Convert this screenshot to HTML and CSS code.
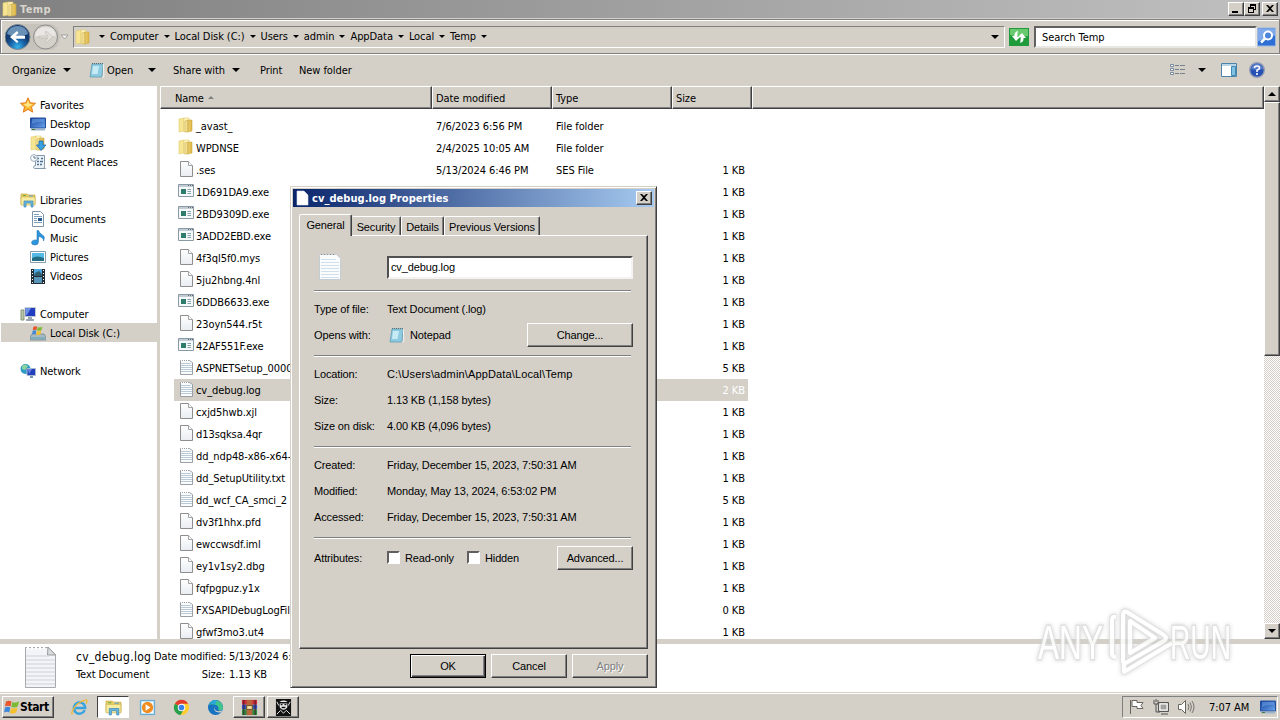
FILE: index.html
```
<!DOCTYPE html>
<html lang="en">
<head>
<meta charset="UTF-8">
<title>Temp</title>
<link rel="stylesheet" href="styles.css">
</head>
<body>
<svg class="defs" width="0" height="0">
    <defs>
        <linearGradient id="gFolder"><stop offset="0" stop-color="#f8ebaa"/><stop offset="1" stop-color="#dcb23c"/></linearGradient>
        <linearGradient id="gBlue" x2="1" y2="1"><stop offset="0" stop-color="#103f9e"/><stop offset="1" stop-color="#6fa8ee"/></linearGradient>
        <radialGradient id="gBack" cy=".9"><stop offset="0" stop-color="#35b5ea"/><stop offset=".6" stop-color="#1a63a8"/><stop offset="1" stop-color="#143c70"/></radialGradient>
        <linearGradient id="gPage" x2="0" y2="1"><stop offset="0" stop-color="#fff"/><stop offset="1" stop-color="#e9edf2"/></linearGradient>
    </defs>
    <symbol id="folder" viewBox="0 0 16 16">
        <path d="M1 2l5-1v13l-5 1z" fill="#f6e592" stroke="#e2cb70" stroke-width=".6"/>
        <path d="M6 1h5v12l-5 2z" fill="#fff2bb" stroke="#e2cb70" stroke-width=".6"/>
        <path d="M7 4l3-1v12H7zM10 3h4v11l-4 1z" fill="url(#gFolder)" stroke="#cfae48" stroke-width=".6"/>
    </symbol>
    <symbol id="page" viewBox="0 0 16 16">
        <path d="M2.500.500h8l4 4v11h-12z" fill="url(#gPage)" stroke="#8e8e8e"/>
        <path d="M10.500.500v4h4" fill="#fff" stroke="#a2a2a2"/>
    </symbol>
    <symbol id="text" viewBox="0 0 16 16">
        <path d="M2.500 1.500h9l3 2v12h-12z" fill="#fbfcfd" stroke="#9a9fa5"/>
        <path d="M3 4.500h10M3 6.500h11M3 8.500h11M3 10.500h11M3 12.500h11" stroke="#b9c9d5"/>
        <path d="M3 1.500h8" stroke="#fff" stroke-dasharray="1 1"/>
    </symbol>
    <symbol id="exe" viewBox="0 0 16 14">
        <path d="M.5.500h15v12H.5z" fill="#f5f9fa" stroke="#8a9aa4"/>
        <path d="M1 2h14" stroke="#c1ccd4" stroke-width="2"/><path d="M10 1.500h5" stroke="#667" stroke-dasharray="1 1"/>
        <path d="M3 5h5v5H3z" fill="#2e7d6c"/><path d="M9.500 5.500H13M9.500 7.500H13M9.500 9.500H13" stroke="#87a1ad"/>
    </symbol>
    <symbol id="notepad" viewBox="0 0 16 16">
        <path d="M3 2h11l-1 13H1z" fill="#8ccbe0" stroke="#5795ad" stroke-width=".7"/>
        <path d="M4 4h6L8.500 12H3z" fill="#c6ebf5"/><path d="M14.300 2l.6 12.500-2 .8" fill="none" stroke="#f5f3ee"/>
        <path d="M3 1.500h11" stroke="#556f78" stroke-dasharray="1 1"/>
    </symbol>
    <symbol id="monitor" viewBox="0 0 16 14">
        <path d="M.5 1h15v10H.5z" fill="url(#gBlue)" stroke="#244f9c"/><path d="M2 2h12v3Q8 4 2 7z" fill="#74a8ea" opacity=".5"/>
        <path d="M1 12.500h14" stroke="#9db4cc" stroke-width="2"/><path d="M2 12.500h3" stroke="#497f36"/>
    </symbol>
    <symbol id="libs" viewBox="0 0 16 16">
        <path d="M1 2h6l1 1h7v9H1z" fill="#ecd266" stroke="#c5a537" stroke-width=".7"/>
        <path d="M1 5h14v8H1z" fill="#f7eca4" stroke="#cdb34c" stroke-width=".7"/><path d="M3 3.500h3" stroke="#61a94b"/><path d="M9 4h4" stroke="#58a4d8"/>
        <path d="M4 15V9h9v6h-2v-4H6v4z" fill="#6bb9df" stroke="#3a87b8" stroke-width=".7"/>
    </symbol>
    <symbol id="winflag" viewBox="0 0 16 16">
        <path d="M2 2.500Q5 .8 7.500 2.500L6.500 7.500Q4 6 1 7.500z" fill="#e7562c"/><path d="M8.300 3Q11 4.500 15 2.500L13.700 7.500Q11 9 7.300 8z" fill="#7dba34"/>
        <path d="M1 8.500Q4 7 6.300 8.500L5.300 13.500Q3 12 0 13.500z" fill="#3f87d8"/><path d="M7 9Q10 10.300 13.500 8.500L12.300 13.500Q9 15.500 6 14z" fill="#f5c12c"/>
    </symbol>
</svg>

<div class="desktop">
    <div class="titlebar">
        <svg class="i16"><use href="#folder"/></svg>
        <span class="caption">Temp</span>
        <div class="win-buttons">
            <span class="wbtn"><svg viewBox="0 0 14 12"><path d="M3 8h6v2H3z"/></svg></span>
            <span class="wbtn"><svg viewBox="0 0 14 12"><path d="M5 1h6v6H9V6h1V3H6v1H5zM3 4h6v6H3zM4 6v3h4V6z" fill-rule="evenodd"/></svg></span>
            <span class="wbtn close"><svg viewBox="0 0 14 12"><path d="M3 2h2l2 2 2-2h2L8 5.500 11 9H9L7 7 5 9H3l3-3.500z"/></svg></span>
        </div>
    </div>

    <div class="navbar">
        <svg class="travel" viewBox="0 0 70 28">
            <path d="M14 1H45Q54 2 55 14Q54 26 45 27H14z" fill="#c6c3bc"/>
            <circle cx="12.500" cy="14" r="12.500" fill="url(#gBack)" stroke="#7f8990"/>
            <path d="M2 11Q4 3 12.500 3T23 11Q12 16 2 11z" fill="#8db4d6" opacity=".7"/>
            <path d="M5 14l7-6 1.500 2-3 2.700H20v3h-9.500l3 2.700L12 20z" fill="#fff"/>
            <circle cx="40.500" cy="14" r="12" fill="#d4d1cb" stroke="#8c8c8a"/>
            <path d="M30 13Q31 4 40.500 4T51 13z" fill="#e9e7e3"/>
            <path d="M48 14l-7-6-1 2 3 3h-9v2h9l-3 3 1 2z" fill="#e2dfda" stroke="#bab7b1" stroke-width=".6"/>
            <path d="M56 12h7l-3.500 4z" fill="#f4f2ef" stroke="#888" stroke-width=".7"/>
        </svg>
        <div class="address">
            <svg class="i16"><use href="#folder"/></svg>
            <i class="down"></i><span>Computer</span>
            <i class="down"></i><span>Local Disk (C:)</span>
            <i class="down"></i><span>Users</span>
            <i class="down"></i><span>admin</span>
            <i class="down"></i><span>AppData</span>
            <i class="down"></i><span>Local</span>
            <i class="down"></i><span>Temp</span>
            <i class="down"></i>
            <i class="down big last"></i>
        </div>
        <svg class="refresh" viewBox="0 0 20 18">
            <path d="M0 0h20v18H0z" fill="#1f9b3c"/><path d="M1 1h18v7Q10 10 1 7z" fill="#68c96f"/>
            <path d="M9 3Q5 4 5.500 8H3l4 5 4-4H8.500Q8 6 9 3zM11 15q4-1 3.500-5H17l-4-5-4 4h2.500q.5 3-.5 6z" fill="#fff"/>
        </svg>
        <div class="search">Search Temp</div>
        <svg class="go" viewBox="0 0 19 19">
            <path d="M.5.500h18v18H.5z" fill="#2e6fd6" stroke="#9fb9de"/><path d="M1 1h17v7Q9 9 1 14z" fill="#7fa9ea"/>
            <circle cx="11" cy="8" r="4" fill="#4c84dc" stroke="#fff" stroke-width="2"/><path d="M8 11l-4 4" stroke="#fff" stroke-width="2.500"/>
        </svg>
    </div>

    <div class="commands">
        <span class="c-org">Organize</span><i class="down big"></i>
        <svg class="i16 c-note"><use href="#notepad"/></svg><span class="c-open">Open</span><i class="down big"></i>
        <span class="c-share">Share with</span><i class="down big"></i>
        <span class="c-print">Print</span>
        <span class="c-new">New folder</span>
        <svg class="c-view" viewBox="0 0 16 14"><path d="M.5 1.500h3v2h-3zM.5 5.500h3v2h-3zM.5 9.500h3v2h-3z" fill="#fff" stroke="#798a9c"/><path d="M5 2.500h4M5 6.500h4M5 10.500h4M10 2.500h5M10 6.500h5M10 10.500h5" stroke="#77828c"/></svg>
        <i class="down big"></i>
        <svg class="c-pane" viewBox="0 0 16 14"><path d="M.5.500h15v13H.5z" fill="#fff" stroke="#4b83ab"/><path d="M1 2h14" stroke="#bad6e6" stroke-width="2"/><path d="M10.500 3.500h4v9h-4z" fill="#7fc2e4" stroke="#4187b2"/></svg>
        <svg class="c-help" viewBox="0 0 16 16"><circle cx="8" cy="8" r="7.300" fill="#2650b4" stroke="#939db6" stroke-width="1.400"/><path d="M2 7Q3 2 8 2t6 5Q8 9 2 7z" fill="#7d9de0" opacity=".6"/><path d="M5.500 6Q5.500 4 8 4t2.500 2Q10.500 7.300 8 8.200V10M8 11v2" fill="none" stroke="#fff" stroke-width="1.600"/></svg>
    </div>

    <div class="main">
        <div class="sidebar">
            <div class="nav top"><svg class="i16" viewBox="0 0 16 16"><path d="M8 .8l2.200 5 5.300.500-4 3.600 1.200 5.200L8 12.400l-4.700 2.700 1.200-5.200-4-3.600 5.300-.5z" fill="#fcb934" stroke="#df7a1e"/><path d="M8 3l1.300 4 3.700.3-5 3-4.500-3.300 3.500-.5z" fill="#ffe88a"/></svg>Favorites</div>
            <div class="nav sub"><svg class="i16"><use href="#monitor"/></svg>Desktop</div>
            <div class="nav sub"><svg class="i16" viewBox="0 0 16 16"><use href="#folder"/><path d="M9 6h4v4h3l-5 5.500L6.500 10H9z" fill="#39a0e2" stroke="#1d69ae" stroke-width=".8"/></svg>Downloads</div>
            <div class="nav sub"><svg class="i16" viewBox="0 0 16 16"><path d="M5.500 1.500h9v10q-1 3 1 3h-11q-2-1 0-3h1z" fill="#edf2f6" stroke="#8397ab"/><path d="M7 4.500h2M11 4.500h2M7 7.500h2M10 7.500h3M7 10.500h2M10 10.500h2" stroke="#4c6f96" stroke-width="1.300"/><circle cx="4" cy="4" r="3.400" fill="#f7fafc" stroke="#9cacb9"/><path d="M4 2v2h2" fill="none" stroke="#5a7796"/></svg>Recent Places</div>
            <div class="nav top gap"><svg class="i16"><use href="#libs"/></svg>Libraries</div>
            <div class="nav sub"><svg class="i16" viewBox="0 0 16 16"><path d="M2.500.500h8l3 3v12h-11z" fill="#fff" stroke="#7d93a8"/><path d="M4 3.500h5M4 5.500h8M4 7.500h3M4 9.500h3M4 11.500h8" stroke="#7d9fc0"/><path d="M8 7h4v3H8z" fill="#275a92"/></svg>Documents</div>
            <div class="nav sub"><svg class="i16" viewBox="0 0 16 16"><path d="M7 .5h1.500q1 3 4 4.500t1 6q0-4-5-4.500v5q0 3.500-3.500 3.500T1.500 12.500Q2 9.500 7 10z" fill="#2d96dd" stroke="#1769ad" stroke-width=".5"/></svg>Music</div>
            <div class="nav sub"><svg class="i16" viewBox="0 0 16 16"><path d="M.5 2.500h15v11H.5z" fill="#fff" stroke="#859cad"/><path d="M2 4h12v8H2z" fill="#55b9e5"/><path d="M2 9q5-3 12 0v3H2z" fill="#246e84"/></svg>Pictures</div>
            <div class="nav sub"><svg class="i16" viewBox="0 0 16 16"><path d="M1 1h14v15H1z" fill="#222d36"/><path d="M4 1h8v7H4z" fill="#4ca6df"/><path d="M4 9h8v6H4z" fill="#5795b9"/><path d="M5 5l4-2 3 3v2H4zM6 10l5 4" fill="#325f70"/><path d="M2.500 2v13M13.500 2v13" stroke="#fff" stroke-dasharray="1 2"/></svg>Videos</div>
            <div class="nav top gap"><svg class="i16" viewBox="0 0 16 16"><path d="M1 4h3v10H1z" fill="#b8c6aa" stroke="#869477"/><path d="M5 1.500h10.500v9H5z" fill="#223ec0" stroke="#c1cad3"/><path d="M6 2h5L7 9H6z" fill="#6b8ee9"/><path d="M8 11h4v2H8zM6 13h8v2H6z" fill="#99a7b4"/></svg>Computer</div>
            <div class="nav sub sel"><svg class="i16" viewBox="0 0 16 16"><path d="M2 9h12l2 3v3H0v-3z" fill="#a7b9c1" stroke="#66818d" stroke-width=".7"/><path d="M1 13h14" stroke="#5aa3b8"/><svg x="2" y="0" width="11" height="11"><use href="#winflag"/></svg></svg>Local Disk (C:)</div>
            <div class="nav top gap"><svg class="i16" viewBox="0 0 16 16"><circle cx="5.500" cy="6" r="5" fill="#2e9bc7"/><path d="M2 3q3-3 6 0L5 7 2 6z" fill="#8bd59c"/><path d="M7 5.500h8.500v7H7z" fill="#223fbe" stroke="#a9b9cf"/><path d="M8 6h4l-3 5z" fill="#6788e2"/><path d="M10 13h3v2h-3z" fill="#7793b5"/></svg>Network</div>
        </div>
        <div class="files">
            <div class="columns">
                <div class="col name">Name <i class="sort"></i></div>
                <div class="col">Date modified</div>
                <div class="col">Type</div>
                <div class="col size">Size</div>
                <div class="col rest"></div>
            </div>
            <div class="rows">
                <div class="row"><svg class="i16"><use href="#folder"/></svg><span>_avast_</span><span>7/6/2023 6:56 PM</span><span>File folder</span><span></span></div>
                <div class="row"><svg class="i16"><use href="#folder"/></svg><span>WPDNSE</span><span>2/4/2025 10:05 AM</span><span>File folder</span><span></span></div>
                <div class="row"><svg class="i16"><use href="#page"/></svg><span>.ses</span><span>5/13/2024 6:46 PM</span><span>SES File</span><span>1 KB</span></div>
                <div class="row"><svg class="i16"><use href="#exe"/></svg><span>1D691DA9.exe</span><span></span><span></span><span>1 KB</span></div>
                <div class="row"><svg class="i16"><use href="#exe"/></svg><span>2BD9309D.exe</span><span></span><span></span><span>1 KB</span></div>
                <div class="row"><svg class="i16"><use href="#exe"/></svg><span>3ADD2EBD.exe</span><span></span><span></span><span>1 KB</span></div>
                <div class="row"><svg class="i16"><use href="#page"/></svg><span>4f3ql5f0.mys</span><span></span><span></span><span>1 KB</span></div>
                <div class="row"><svg class="i16"><use href="#page"/></svg><span>5ju2hbng.4nl</span><span></span><span></span><span>1 KB</span></div>
                <div class="row"><svg class="i16"><use href="#exe"/></svg><span>6DDB6633.exe</span><span></span><span></span><span>1 KB</span></div>
                <div class="row"><svg class="i16"><use href="#page"/></svg><span>23oyn544.r5t</span><span></span><span></span><span>1 KB</span></div>
                <div class="row"><svg class="i16"><use href="#exe"/></svg><span>42AF551F.exe</span><span></span><span></span><span>1 KB</span></div>
                <div class="row"><svg class="i16"><use href="#text"/></svg><span>ASPNETSetup_00000</span><span></span><span></span><span>5 KB</span></div>
                <div class="row sel"><svg class="i16"><use href="#text"/></svg><span>cv_debug.log</span><span></span><span></span><span>2 KB</span></div>
                <div class="row"><svg class="i16"><use href="#page"/></svg><span>cxjd5hwb.xjl</span><span></span><span></span><span>1 KB</span></div>
                <div class="row"><svg class="i16"><use href="#page"/></svg><span>d13sqksa.4qr</span><span></span><span></span><span>1 KB</span></div>
                <div class="row"><svg class="i16"><use href="#text"/></svg><span>dd_ndp48-x86-x64-</span><span></span><span></span><span>1 KB</span></div>
                <div class="row"><svg class="i16"><use href="#text"/></svg><span>dd_SetupUtility.txt</span><span></span><span></span><span>1 KB</span></div>
                <div class="row"><svg class="i16"><use href="#text"/></svg><span>dd_wcf_CA_smci_2</span><span></span><span></span><span>5 KB</span></div>
                <div class="row"><svg class="i16"><use href="#page"/></svg><span>dv3f1hhx.pfd</span><span></span><span></span><span>1 KB</span></div>
                <div class="row"><svg class="i16"><use href="#page"/></svg><span>ewccwsdf.iml</span><span></span><span></span><span>1 KB</span></div>
                <div class="row"><svg class="i16"><use href="#page"/></svg><span>ey1v1sy2.dbg</span><span></span><span></span><span>1 KB</span></div>
                <div class="row"><svg class="i16"><use href="#page"/></svg><span>fqfpgpuz.y1x</span><span></span><span></span><span>1 KB</span></div>
                <div class="row"><svg class="i16"><use href="#text"/></svg><span>FXSAPIDebugLogFil</span><span></span><span></span><span>0 KB</span></div>
                <div class="row"><svg class="i16"><use href="#page"/></svg><span>gfwf3mo3.ut4</span><span></span><span></span><span>1 KB</span></div>
            </div>
        </div>
        <div class="scrollbar">
            <span class="sbtn"><i class="up"></i></span>
            <span class="thumb"></span>
            <span class="sbtn end"><i class="down big"></i></span>
        </div>
    </div>

    <div class="details">
        <svg class="d-icon" viewBox="0 0 34 44">
            <path d="M2.500 2.500h23l7 7v33h-30z" fill="#f2f4f7" stroke="#a6a9ad"/><path d="M25 2l-.5 8h8z" fill="#d9dcdf" stroke="#9b9b9b"/>
            <path d="M3 11h23M3 15h29M3 19h29M3 23h29M3 27h29M3 31h29M3 35h29M3 39h29" stroke="#cdd2da"/><path d="M4 3h20" stroke="#fff" stroke-width="3" stroke-dasharray="2 2"/>
        </svg>
        <div class="d-names"><div class="d-title">cv_debug.log</div><div>Text Document</div></div>
        <div class="d-props">
            <div><label>Date modified:</label>5/13/2024 6:53 PM</div>
            <div><label>Size:</label>1.13 KB</div>
        </div>
    </div>

    <div class="taskbar">
        <div class="start"><svg class="i16"><use href="#winflag"/></svg>Start</div>
        <div class="task"><svg viewBox="0 0 18 18"><path d="M14.500 12A6 6 0 1 1 15 9.500H4.500" fill="none" stroke="#36a3df" stroke-width="2.600"/><path d="M2 15Q-1 17 3 10T16 1q2 0 0 4" fill="none" stroke="#ecb93a" stroke-width="1.400"/></svg></div>
        <div class="task active"><svg viewBox="0 0 16 16"><use href="#libs"/></svg></div>
        <div class="task"><svg viewBox="0 0 18 18"><path d="M1.500 1.500h15v15h-15z" fill="#b9e0f6" stroke="#5aa6d2"/><path d="M3 3h12v12H3z" fill="#fff"/><circle cx="9" cy="9" r="6" fill="#ef8c22"/><path d="M7 5.500l5 3.500-5 3.500z" fill="#fff"/></svg></div>
        <div class="task"><svg viewBox="0 0 18 18"><circle cx="9" cy="9" r="8" fill="#ffcd2e"/><path d="M9 9L2 5a8 8 0 0 1 14 0H9z" fill="#e33b2e"/><path d="M9 9l-7-4a8 8 0 0 0 6 12l4-7z" fill="#279f4c"/><circle cx="9" cy="9" r="4" fill="#fff"/><circle cx="9" cy="9" r="3" fill="#3c80ea"/></svg></div>
        <div class="task"><svg viewBox="0 0 18 18"><circle cx="9" cy="9" r="8" fill="#1773c2"/><path d="M2 6a8 8 0 0 1 15 3q0 4-5 3 1-5-3-6T2 6z" fill="#40c48b"/><path d="M2 6a8 8 0 0 1 8-5l-1 5q-4-2-7 0z" fill="#2ba7d8"/><path d="M10 8q-3 1-1 4 3 2 7 0l-1 2q-6 1-7-2-1-3 2-4z" fill="#d4d0c8"/></svg></div>
        <div class="task raised"><svg viewBox="0 0 18 18"><path d="M1 1h16v5H1z" fill="#cf2a38"/><path d="M1 6h16v5H1z" fill="#3450bb"/><path d="M1 11h16v6H1z" fill="#2f8b40"/><path d="M6 1h6v16H6z" fill="#b8653c"/><path d="M3 1v16M15 1v16" stroke="#401f28"/><path d="M6 7h6v4H6z" fill="#f4e5a6" stroke="#684c1b"/></svg></div>
        <div class="task raised"><svg viewBox="0 0 18 18"><path d="M1 0h16v18H1z" fill="#111"/><path d="M5 3q4-3 8 0v6q-4 5-8 0z" fill="#eee"/><path d="M4 4h10M6 6h2M10 6h2M7 9h4" stroke="#111" stroke-width="1.400"/><path d="M2 16l4-4 3 3 3-3 4 4M2 3l2 4M16 3l-2 4" fill="none" stroke="#eee"/></svg></div>
        <div class="tray">
            <svg class="t-flag" viewBox="0 0 16 16"><path d="M1.500 1v14M3 1.500h5v2h6l-2 3 2 3H8v-2H3z" fill="#fff" stroke="#67635f"/></svg>
            <svg class="t-net" viewBox="0 0 16 16"><path d="M5.500 3.500h10v9h-10z" fill="#ccc9c3" stroke="#555"/><path d="M1 1v4h4V1M3 0v3M3 5v8h4M8 15h7" fill="none" stroke="#555"/><path d="M7 5h7v6H7z" fill="#a3a29f" stroke="#fff"/></svg>
            <svg class="t-vol" viewBox="0 0 18 16"><path d="M1.500 5.500h3l4-4v13l-4-4h-3z" fill="#fff" stroke="#68645f"/><path d="M11 5q2 3 0 6M13 3.500q3 4.500 0 9M15 2q4 6 0 12" fill="none" stroke="#77736e"/></svg>
            <span class="clock">7:07 AM</span>
            <svg class="i16"><use href="#monitor"/></svg>
        </div>
    </div>

    <svg class="watermark" viewBox="0 0 230 90">
        <g class="wm-text"><text x="6" y="52" textLength="65" lengthAdjust="spacingAndGlyphs">ANY</text><text x="138" y="52" textLength="61" lengthAdjust="spacingAndGlyphs">RUN</text></g>
        <path class="wm-line" d="M84 10q-4-1-4 3v33q0 4 4 4M91 56V8q0-5 4-3l37 23q4 3 0 6L92 57v8l48-29M98 14v32l25-15z"/>
        <path class="wm-core" d="M84 10q-4-1-4 3v33q0 4 4 4M91 56V8q0-5 4-3l37 23q4 3 0 6L92 57v8l48-29M98 14v32l25-15z"/>
    </svg>

    <div class="dialog">
        <div class="dlg-title">
            <svg class="i16" viewBox="0 0 16 16"><path d="M3 1h7l4 4v10H3z" fill="#fff" stroke="#d9e4f2" stroke-width=".6"/></svg>
            <span>cv_debug.log Properties</span>
            <span class="wbtn"><svg viewBox="0 0 14 12"><path d="M3 2h2l2 2 2-2h2L8 5.500 11 9H9L7 7 5 9H3l3-3.500z"/></svg></span>
        </div>
        <div class="tabs">
            <span class="tab on">General</span><span class="tab sec">Security</span><span class="tab det">Details</span><span class="tab prev">Previous Versions</span>
        </div>
        <div class="panel">
            <div class="prop head"><label><svg class="file-big" viewBox="0 0 24 28"><path d="M1.500 1.500h17l4 4v21h-21z" fill="#fafcfe" stroke="#c5cdd4"/><path d="M3 6.500h15M3 9.500h18M3 12.500h18M3 15.500h18M3 18.500h18M3 21.500h18M3 24.500h18" stroke="#cfdfeb"/><path d="M3 1.500h15" stroke="#8c8c8c" stroke-dasharray="1 2"/></svg></label><div class="textbox">cv_debug.log</div></div>
            <hr>
            <div class="prop"><label>Type of file:</label><span>Text Document (.log)</span></div>
            <div class="prop"><label>Opens with:</label><svg class="i16 np"><use href="#notepad"/></svg><span>Notepad</span><button class="change">Change...</button></div>
            <hr>
            <div class="prop"><label>Location:</label><span class="path">C:\Users\admin\AppData\Local\Temp</span></div>
            <div class="prop"><label>Size:</label><span>1.13 KB (1,158 bytes)</span></div>
            <div class="prop"><label>Size on disk:</label><span>4.00 KB (4,096 bytes)</span></div>
            <hr>
            <div class="prop"><label>Created:</label><span>Friday, December 15, 2023, 7:50:31 AM</span></div>
            <div class="prop"><label>Modified:</label><span>Monday, May 13, 2024, 6:53:02 PM</span></div>
            <div class="prop"><label>Accessed:</label><span>Friday, December 15, 2023, 7:50:31 AM</span></div>
            <hr>
            <div class="prop attrs"><label>Attributes:</label><i class="check"></i><span class="ro">Read-only</span><i class="check"></i><span>Hidden</span><button class="adv">Advanced...</button></div>
        </div>
        <div class="dlg-buttons"><button class="ok">OK</button><button>Cancel</button><button class="off">Apply</button></div>
    </div>
</div>
</body>
</html>
```
FILE: styles.css
```
* {
    box-sizing: border-box;
}

body {
    margin: 0;
    font-family: "DejaVu Sans Condensed", "DejaVu Sans", sans-serif;
    font-stretch: condensed;
    font-size: 11px;
    letter-spacing: -0.08px;
    color: #000;
}

.defs {
    position: absolute;
}

.desktop {
    position: relative;
    width: 1280px;
    height: 720px;
    overflow: hidden;
    background: #d4d0c8;
    display: flex;
    flex-direction: column;
    white-space: nowrap;
}

svg {
    display: block;
    flex: none;
}

.i16 {
    width: 16px;
    height: 16px;
}

/* small triangles */
.down {
    border: 3px solid transparent;
    border-top-color: #000;
    border-bottom: 0;
    flex: none;
}

.down.big {
    border-width: 4px;
    border-bottom: 0;
}

.up {
    border: 4px solid transparent;
    border-bottom-color: #000;
    border-top: 0;
}

/* title bar */
.titlebar {
    height: 18px;
    flex: none;
    display: flex;
    align-items: center;
    padding: 0 2px;
    background: linear-gradient(to right, #808080, #c0c0c0);
    color: #d8d5ce;
    font-weight: bold;
    letter-spacing: 0.4px;
}

.caption {
    margin-left: 2px;
}

.win-buttons {
    margin-left: auto;
    display: flex;
}

.wbtn {
    width: 16px;
    height: 14px;
    background: #d4d0c8;
    border: 1px solid;
    border-color: #fff #404040 #404040 #fff;
    box-shadow: inset -1px -1px #808080;
}

.wbtn svg {
    width: 14px;
    height: 12px;
}

.wbtn.close {
    margin-left: 2px;
}

/* address bar */
.navbar {
    height: 35px;
    flex: none;
    margin-top: 1px;
    border: 1px solid #808080;
    box-shadow: inset 1px 1px #fff, 0 1px #fff;
    display: flex;
    align-items: center;
    padding: 0 0 0 4px;
}

.travel {
    width: 70px;
    height: 28px;
}

.address {
    width: 932px;
    height: 22px;
    margin-left: -2px;
    padding-left: 1px;
    border: 1px solid;
    border-color: #808080 #fff #fff #808080;
    display: flex;
    align-items: center;
    gap: 5px;
}

.address .down {
    margin-left: 0;
}

.address .i16 + .down {
    margin-left: 3px;
}

.address .down.last {
    margin: 0 5px 0 auto;
}

.refresh {
    width: 20px;
    height: 18px;
    margin: 0 5px 0 4px;
}

.search {
    width: 223px;
    height: 22px;
    background: #fff;
    border: 2px solid;
    border-color: #606060 #e8e6e2 #e8e6e2 #606060;
    padding: 3px 6px;
    line-height: 14px;
}

.go {
    width: 19px;
    height: 20px;
}

/* command bar */
.commands {
    height: 32px;
    flex: none;
    display: flex;
    align-items: center;
    padding-left: 12px;
}

.commands .down {
    margin-left: 8px;
}

.c-org {
    width: 43px;
}

.commands .c-note {
    margin-left: 18px;
}

.c-open {
    width: 27px;
    margin-left: 2px;
}

.c-open + .down.big {
    margin-left: 14px;
}

.c-share {
    width: 51px;
    margin-left: 17px;
}

.c-print {
    width: 22px;
    margin-left: 20px;
}

.c-new {
    margin-left: 17px;
}

.c-view {
    width: 16px;
    height: 14px;
    margin-left: auto;
}

.c-view + .down.big {
    margin-left: 12px;
}

.c-pane {
    width: 16px;
    height: 14px;
    margin: 0 12px 0 15px;
}

.c-help {
    width: 16px;
    height: 16px;
    margin-right: 15px;
}

/* explorer body */
.main {
    height: 553px;
    flex: none;
    display: flex;
    background: #fff;
}

.sidebar {
    width: 160px;
    padding-top: 9px;
    border-right: 3px solid #d4d0c8;
}

.nav {
    height: 19px;
    padding-top: 2px;
    display: flex;
    align-items: center;
    gap: 4px;
}

.nav .i16 {
    margin-top: -2px;
}

.nav.top {
    padding-left: 20px;
}

.nav.sub {
    padding-left: 30px;
}

.nav.gap {
    margin-top: 19px;
}

.nav.sel {
    background: #d4d0c8;
    margin-left: 1px;
    padding-left: 29px;
}

.files {
    flex: 1;
    overflow: hidden;
}

.columns {
    display: flex;
    height: 23px;
}

.col {
    width: 120px;
    padding: 0 3px;
    background: #d4d0c8;
    border: 1px solid;
    border-color: #fff #404040 #404040 #fff;
    box-shadow: inset -1px -1px #808080;
    line-height: 23px;
}

.col.name {
    width: 272px;
    padding-left: 14px;
}

.col.size {
    width: 80px;
}

.col.rest {
    flex: 1;
}

.sort {
    display: inline-block;
    vertical-align: 3px;
    margin-left: 1px;
    border: 3px solid transparent;
    border-bottom-color: #808080;
    border-top: 0;
}

.rows {
    margin-left: 14px;
    padding-top: 6px;
}

.row {
    width: 574px;
    height: 22px;
    display: grid;
    grid-template-columns: 18px 240px 120px 120px 69px;
    align-items: center;
    padding-left: 4px;
}

.row .i16 {
    margin-top: -2px;
}

.row span:last-child {
    text-align: right;
}

.row.sel {
    background: #d4d0c8;
}

.row.sel span:last-child {
    color: #fff;
}

.scrollbar {
    width: 16px;
    display: flex;
    flex-direction: column;
    background: repeating-conic-gradient(#fff 0 25%, #d4d0c8 0 50%) 0 0 / 2px 2px;
}

.sbtn,
.thumb {
    background: #d4d0c8;
    border: 1px solid;
    border-color: #fff #404040 #404040 #fff;
    box-shadow: inset -1px -1px #808080;
}

.sbtn {
    height: 16px;
    display: flex;
    align-items: center;
    justify-content: center;
}

.thumb {
    height: 254px;
}

.sbtn.end {
    margin-top: auto;
}

/* details pane */
.details {
    height: 53px;
    flex: none;
    border-top: 5px solid #d4d0c8;
    background: #fff;
    display: flex;
}

.d-icon {
    width: 34px;
    height: 44px;
    margin: 1px 0 0 23px;
}

.d-names {
    width: 78px;
    margin-left: 19px;
}

.d-title {
    font-size: 12px;
    letter-spacing: 0.3px;
}

.d-names div,
.d-props div {
    height: 18px;
    line-height: 18px;
}

.d-names,
.d-props {
    padding-top: 4px;
}

.d-props label {
    display: inline-block;
    width: 71px;
    margin-right: 4px;
    text-align: right;
}

/* taskbar */
.taskbar {
    height: 28px;
    flex: none;
    border-top: 1px solid #d4d0c8;
    box-shadow: inset 0 1px #fff;
    padding: 3px 2px 1px;
    display: flex;
}

.start {
    width: 52px;
    height: 22px;
    padding-left: 1px;
    display: flex;
    align-items: center;
    border: 1px solid;
    border-color: #fff #404040 #404040 #fff;
    box-shadow: inset -1px -1px #808080;
    font-weight: bold;
    font-size: 12px;
    letter-spacing: -0.4px;
    margin-right: 9px;
}

.task {
    width: 32px;
    height: 22px;
    margin-right: 2px;
    border: 1px solid transparent;
    display: flex;
    align-items: center;
    justify-content: center;
}

.task svg {
    width: 17px;
    height: 17px;
}

.task.active {
    background: #fff;
    border-color: #404040 #fff #fff #404040;
}

.task.raised {
    border-color: #fff #404040 #404040 #fff;
    box-shadow: inset -1px -1px #808080;
}

.tray {
    margin-left: auto;
    width: 156px;
    height: 22px;
    border: 1px solid;
    border-color: #808080 #fff #fff #808080;
    display: flex;
    align-items: center;
    padding-left: 6px;
}

.t-flag,
.t-net {
    width: 16px;
    height: 16px;
    margin-right: 8px;
}

.t-vol {
    width: 18px;
    height: 16px;
}

.clock {
    width: 41px;
    margin: 0 10px 0 14px;
}

/* watermark */
.watermark {
    position: absolute;
    left: 1032px;
    top: 607px;
    width: 230px;
    height: 90px;
    overflow: visible;
    fill: #fff;
    stroke: #dcdcdc;
    stroke-width: 1.5;
    opacity: 0.85;
    filter: drop-shadow(0 0 2px #ccc);
}

.wm-line,
.wm-core {
    fill: none;
    stroke-width: 6;
    stroke-linejoin: round;
}

.wm-core {
    stroke: #fff;
    stroke-width: 4;
}

.wm-text {
    font: 48px "Liberation Sans Narrow", "Liberation Sans", sans-serif;
    letter-spacing: 0;
    stroke-width: 3;
    paint-order: stroke;
}

/* properties dialog */
.dialog {
    position: absolute;
    left: 290px;
    top: 186px;
    width: 367px;
    height: 502px;
    background: #d4d0c8;
    border: 1px solid;
    border-color: #d4d0c8 #404040 #404040 #d4d0c8;
    box-shadow: inset 1px 1px #fff, inset -1px -1px #808080;
    padding: 2px;
    font-family: "Liberation Sans", Arial, sans-serif;
    font-stretch: normal;
    letter-spacing: -0.13px;
}

.dlg-title {
    height: 18px;
    display: flex;
    align-items: center;
    padding: 0 2px 0 1px;
    background: linear-gradient(to right, #0a246a, #a6caf0);
    color: #fff;
    font-family: "DejaVu Sans Condensed", "DejaVu Sans", sans-serif;
    font-stretch: condensed;
    font-weight: bold;
    letter-spacing: 0.06px;
}

.dlg-title span:nth-child(2) {
    margin-left: 2px;
}

.dlg-title .wbtn {
    margin-left: auto;
}

.tabs {
    display: flex;
    align-items: flex-end;
    height: 28px;
    padding-left: 6px;
}

.tab {
    position: relative;
    height: 19px;
    line-height: 20px;
    text-align: center;
    border: solid;
    border-width: 1px 1px 0;
    border-color: #fff #404040 transparent #fff;
    box-shadow: inset -1px 0 #808080;
    border-radius: 2px 2px 0 0;
}

.tab.on {
    width: 53px;
    height: 22px;
    margin-bottom: -1px;
    background: #d4d0c8;
    z-index: 1;
}

.tab.sec {
    width: 49px;
    border-left: 0;
}

.tab.det {
    width: 43px;
}

.tab.prev {
    width: 96px;
}

.panel {
    width: 349px;
    height: 414px;
    margin-left: 6px;
    border: 1px solid;
    border-color: #fff #404040 #404040 #fff;
    box-shadow: inset -1px -1px #808080;
    padding: 15px 14px 0;
}

.panel hr {
    width: 317px;
    height: 2px;
    margin: 7px 0 4px;
    border: 0;
    border-top: 1px solid #808080;
    border-bottom: 1px solid #fff;
}

.prop {
    height: 26px;
    display: flex;
    align-items: center;
}

.prop label {
    width: 73px;
    flex: none;
}

.prop.head {
    height: 32px;
}

.prop.attrs {
    height: 29px;
}

.file-big {
    width: 24px;
    height: 28px;
    margin-left: 4px;
}

.textbox {
    width: 246px;
    height: 23px;
    padding: 1px 2px;
    line-height: 16px;
    background: #fff;
    border: 2px solid;
    border-color: #505050 #f4f3f1 #f4f3f1 #505050;
}

.np {
    margin: 0 5px 0 2px;
}

.path {
    letter-spacing: 0.14px;
}

button {
    height: 24px;
    padding: 0;
    font: inherit;
    letter-spacing: inherit;
    color: #000;
    background: #d4d0c8;
    border: 1px solid;
    border-color: #fff #404040 #404040 #fff;
    box-shadow: inset -1px -1px #808080;
}

.change {
    width: 106px;
    margin-left: auto;
}

.check {
    width: 13px;
    height: 13px;
    background: #fff;
    border: 2px solid;
    border-color: #606060 #fff #fff #606060;
    margin-right: 5px;
}

.ro {
    width: 62px;
}

.adv {
    width: 76px;
    margin-left: auto;
}

.dlg-buttons {
    display: flex;
    justify-content: flex-end;
    gap: 5px;
    padding: 5px 6px 0 0;
}

.dlg-buttons button {
    width: 76px;
}

.dlg-buttons .ok {
    border-color: #000;
    box-shadow: inset 1px 1px #fff, inset -1px -1px #404040, inset -2px -2px #808080;
}

.dlg-buttons .off {
    color: #808080;
    text-shadow: 1px 1px #fff;
}
```
